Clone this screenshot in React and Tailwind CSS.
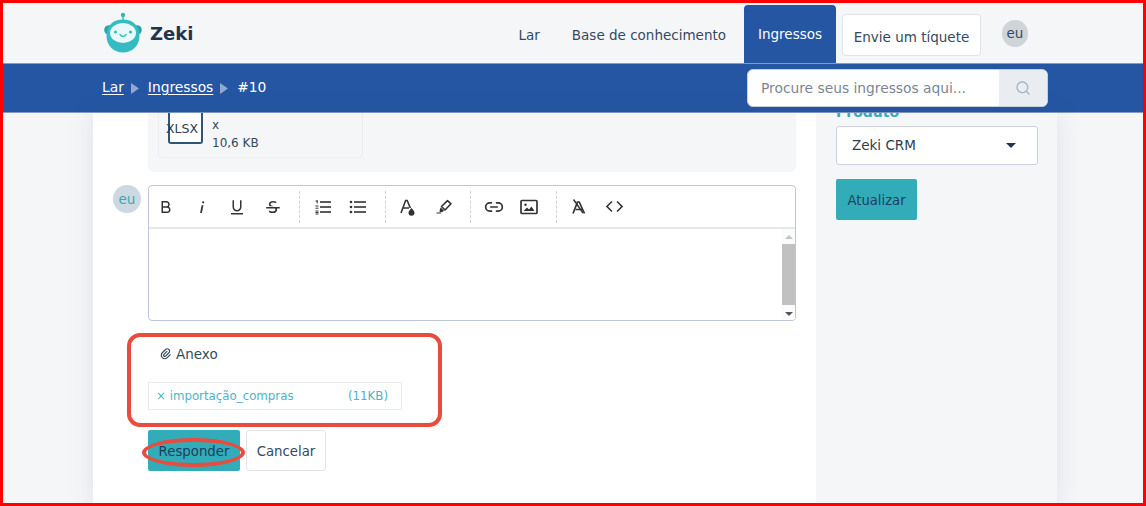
import React from "react";
import {
  RiBold, RiUnderline, RiStrikethrough, RiAttachment2, RiSearchLine, RiCodeLine,
} from "react-icons/ri";
import { Link2 } from "lucide-react";

const FONT = "font-['DejaVu_Sans','Liberation_Sans',sans-serif]";

function Logo() {
  return (
    <svg width="38" height="42" viewBox="0 0 38 42" className="shrink-0">
      <circle cx="19" cy="3" r="2.2" fill="#33b5bd" />
      <rect x="18.3" y="3" width="1.4" height="6" fill="#33b5bd" />
      <circle cx="5" cy="18" r="4.8" fill="#2aa3ad" />
      <circle cx="33" cy="18" r="4.8" fill="#2aa3ad" />
      <path d="M2.5 24C2.5 13 9.5 7.5 19 7.5S35.5 13 35.5 24C35.5 34 28 40.5 19 40.5S2.5 34 2.5 24Z" fill="#35bcc2" />
      <ellipse cx="19" cy="21" rx="13" ry="10" fill="#e9f8f8" />
      <circle cx="11.5" cy="20" r="1.6" fill="#35bcc2" />
      <circle cx="26.5" cy="20" r="1.6" fill="#35bcc2" />
      <path d="M16 22.5C17.2 25 20.8 25 22 22.5" fill="none" stroke="#35bcc2" strokeWidth="1.5" strokeLinecap="round" />
    </svg>
  );
}

function Arrow() {
  return (
    <svg width="8" height="11" viewBox="0 0 8 11" className="shrink-0">
      <path d="M0 0L8 5.5L0 11Z" fill="#92a9cf" />
    </svg>
  );
}

function ItalicIcon() {
  return (
    <svg width="18" height="18" viewBox="0 0 18 18" fill="#333">
      <path d="M8.6 7.2H10.4L8.9 15H7.1Z" />
      <circle cx="10.2" cy="4.3" r="1.1" />
    </svg>
  );
}

function OrderedIcon() {
  return (
    <svg width="18" height="18" viewBox="0 0 18 18" fill="#333">
      <rect x="6" y="3.2" width="11" height="1.6" />
      <rect x="6" y="8.2" width="11" height="1.6" />
      <rect x="6" y="13.2" width="11" height="1.6" />
      <rect x="1.5" y="2.5" width="2.4" height="1" />
      <rect x="2.7" y="2.5" width="1" height="3" />
      <rect x="1.5" y="7.5" width="3" height="1" />
      <rect x="1.5" y="9.7" width="3" height="1" />
      <rect x="1.5" y="12.5" width="3" height="1" />
      <rect x="1.5" y="14" width="3" height="1" />
      <rect x="1.5" y="15.5" width="3" height="1" />
    </svg>
  );
}

function UnorderedIcon() {
  return (
    <svg width="18" height="18" viewBox="0 0 18 18" fill="#333">
      <rect x="5" y="3.2" width="12" height="1.6" />
      <rect x="5" y="8.2" width="12" height="1.6" />
      <rect x="5" y="13.2" width="12" height="1.6" />
      <circle cx="2" cy="4" r="1.3" />
      <circle cx="2" cy="9" r="1.3" />
      <circle cx="2" cy="14" r="1.3" />
    </svg>
  );
}

function FontColorIcon() {
  return (
    <svg width="18" height="18" viewBox="0 0 18 18" fill="none">
      <path d="M2 15L6.6 2.5H8.2L11.3 10" stroke="#333" strokeWidth="1.6" />
      <path d="M4 10H10" stroke="#333" strokeWidth="1.5" />
      <path d="M12.5 10C14 12 15.5 13 15.5 14.7A3 3 0 0 1 9.5 14.7C9.5 13 11 12 12.5 10Z" fill="#333" />
    </svg>
  );
}

function PenIcon() {
  return (
    <svg width="18" height="18" viewBox="0 0 18 18" fill="none">
      <path d="M6.5 8.5L12.5 2.7L16 5.8L10 12Z" stroke="#333" strokeWidth="1.6" strokeLinejoin="round" />
      <path d="M5.7 9.5L9 12.8L7.3 14H4.5L5 11Z" fill="#333" />
      <path d="M1.5 14.5H6.2V15.6H1.5Z" fill="#333" />
    </svg>
  );
}

function ImageIcon() {
  return (
    <svg width="18" height="18" viewBox="0 0 18 18" fill="none">
      <rect x="1" y="2.5" width="16" height="13" rx="1" stroke="#333" strokeWidth="1.7" />
      <circle cx="5.5" cy="6.8" r="1.2" fill="#333" />
      <path d="M3.5 13L7 9.5L9 11.5L11.5 8.5L14.5 13Z" fill="#333" />
    </svg>
  );
}

function ClearIcon() {
  return (
    <svg width="18" height="18" viewBox="0 0 18 18" fill="none">
      <path d="M3 15.5L7.5 4H9.2L14.5 15.5" stroke="#333" strokeWidth="1.7" />
      <path d="M5.5 11.5H12" stroke="#333" strokeWidth="1.5" />
      <path d="M3.5 1.5L13 15" stroke="#333" strokeWidth="1.4" />
    </svg>
  );
}

function Tool({ children }) {
  return <span className="flex w-[35.5px] items-center justify-center text-[#333]">{children}</span>;
}

function Sep() {
  return <span className="ml-[8.5px] mr-[5px] h-[32px] border-l border-dashed border-[#ccd4e0]" />;
}

export default function App() {
  return (
    <div className={`${FONT} relative box-border h-[506px] w-[1146px] overflow-hidden border-[3px] border-[#ff0000] bg-[#f5f6f8] text-[13.5px] text-[#2c3e50]`}>
      <header className="flex h-[60px] items-center pl-[101px] pr-[115px]">
        <Logo />
        <span className="ml-[8px] text-[18px] font-bold text-[#1e3550]">Zeki</span>
        <nav className="ml-auto flex h-full items-end">
          <a className="mb-[18px] mr-[32px] text-[#34495e]">Lar</a>
          <a className="mb-[18px] mr-[18px] text-[#34495e]">Base de conhecimento</a>
          <a className="flex h-[58px] w-[92px] items-center justify-center rounded-t-[4px] bg-[#2556a3] text-white">Ingressos</a>
          <a className="mb-[7px] ml-[6px] flex h-[42px] w-[139px] items-center justify-center rounded-[4px] border border-[#dfe3ea] bg-white pt-[4px] text-[#34495e]">Envie um tíquete</a>
          <span className="mb-[16px] ml-[21px] flex h-[27px] w-[26px] items-center justify-center rounded-full bg-[#ced4da] text-[#34495e]">eu</span>
        </nav>
      </header>

      <div className="flex h-[50px] items-center border-y border-y-[#7f9bc6] bg-[#2556a3] pl-[99px] pr-[95px] text-[13.8px] text-white">
        <a className="mb-[2px] underline underline-offset-2">Lar</a>
        <span className="ml-[7px] mr-[9px]"><Arrow /></span>
        <a className="mb-[2px] underline underline-offset-2">Ingressos</a>
        <span className="ml-[7px] mr-[9px]"><Arrow /></span>
        <span className="mb-[2px]">#10</span>
        <div className="ml-auto flex h-[38px] w-[301px] overflow-hidden rounded-[6px] border border-[#c4cfe0] bg-white">
          <span className="flex flex-1 items-center pl-[13px] pt-[1px] text-[#7a8696]">Procure seus ingressos aqui...</span>
          <span className="flex w-[48px] items-center justify-center bg-[#e9ecf1] text-[#a9b4c2]">
            <RiSearchLine size={16} />
          </span>
        </div>
      </div>

      <main className="ml-[90px] flex h-[393px] w-[964px] overflow-hidden bg-white shadow-[0_0_24px_rgba(60,70,90,0.12)]">
        <section className="w-[723px] shrink-0">
          <div className="ml-[55px] mr-[20px] h-[59px] rounded-b-[6px] bg-[#f5f6f8] pl-[10px]">
            <div className="flex h-[45px] w-[205px] rounded-b-[4px] border border-t-0 border-[#eceef2] pl-[9px]">
              <div className="relative h-[31px] w-[35px] rounded-b-[3px] border-[2px] border-t-0 border-[#2f5577] bg-white">
                <span className="absolute left-[-4px] top-[8px] text-[12.5px] leading-[15px] text-[#2c3e50]">XLSX</span>
              </div>
              <div className="ml-[9px] text-[12px] leading-[19px] text-[#34495e]">
                <div className="mt-[3px]">x</div>
                <div className="mt-[-1px]">10,6 KB</div>
              </div>
            </div>
          </div>

          <div className="ml-[20px] mr-[20px] mt-[13px] flex">
            <span className="flex h-[28px] w-[28px] shrink-0 items-center justify-center rounded-full bg-[#ced8e0] text-[#3aa9b8]">eu</span>
            <div className="ml-[6.5px] h-[136px] flex-1 overflow-hidden rounded-[4px] border border-[#bcc6d4]">
              <div className="flex h-[43px] items-center border-b-[2px] border-b-[#e4e8ee]">
                <Tool><RiBold size={18} /></Tool>
                <Tool><ItalicIcon /></Tool>
                <Tool><RiUnderline size={18} /></Tool>
                <Tool><RiStrikethrough size={18} /></Tool>
                <Sep />
                <Tool><OrderedIcon /></Tool>
                <Tool><UnorderedIcon /></Tool>
                <Sep />
                <Tool><FontColorIcon /></Tool>
                <Tool><PenIcon /></Tool>
                <Sep />
                <Tool><Link2 size={20} strokeWidth={2} /></Tool>
                <Tool><ImageIcon /></Tool>
                <Sep />
                <Tool><ClearIcon /></Tool>
                <Tool><RiCodeLine size={19} /></Tool>
              </div>
              <div className="flex h-[91px] justify-end">
                <div className="flex w-[13px] flex-col items-center bg-[#fbfbfb]">
                  <span className="mt-[6px] h-0 w-0 border-x-[4px] border-b-[4px] border-x-transparent border-b-[#c4c4c4]" />
                  <span className="mt-[5px] h-[61px] w-full bg-[#c1c1c1]" />
                  <span className="mt-auto mb-[4px] h-0 w-0 border-x-[4px] border-t-[4px] border-x-transparent border-t-[#555]" />
                </div>
              </div>
            </div>
          </div>

          <div className="ml-[55px] mt-[22px] flex h-[22px] items-center pl-[11px] text-[#34495e]">
            <RiAttachment2 size={14} className="mr-[3px]" />
            <span>Anexo</span>
          </div>
          <div className="ml-[55px] mt-[17px] flex h-[28px] w-[254px] items-center justify-between border border-[#e6e9ee] pl-[7px] pr-[13px] pt-[1px] text-[11.8px] text-[#4db3c4]">
            <span>× importação_compras</span>
            <span>(11KB)</span>
          </div>
          <div className="ml-[55px] mt-[20px] flex gap-[6px] text-[13.3px]">
            <button className="h-[41px] w-[92px] rounded-[2px] bg-[#33acb9] pt-[2px] text-[#1e3f5c]">Responder</button>
            <button className="h-[41px] w-[80px] rounded-[3px] border border-[#dfe4ec] bg-white pt-[2px] text-[#34495e]">Cancelar</button>
          </div>
        </section>

        <aside className="flex-1 bg-[#f5f6f8] pl-[20px]">
          <div className="mt-[-11px] mb-[2px] h-[22px] text-[14px] font-bold leading-[20px] text-[#3aa9b8]">Produto</div>
          <div className="flex h-[39px] w-[202px] items-center justify-between rounded-[3px] border border-[#c9d2de] bg-white pl-[15px] pr-[21px]">
            <span>Zeki CRM</span>
            <span className="h-0 w-0 border-x-[5px] border-t-[5px] border-x-transparent border-t-[#1e3550]" />
          </div>
          <button className="mt-[14px] h-[41px] w-[81px] rounded-[2px] bg-[#33acb9] pt-[2px] text-[13.2px] text-[#1e3f5c]">Atualizar</button>
        </aside>
      </main>

      <div className="absolute left-[124px] top-[330px] h-[94px] w-[315px] rounded-[13px] border-[4px] border-[#e74c3c]" />
      <div className="absolute left-[139px] top-[435px] h-[29px] w-[103px] rounded-[50%] border-[4px] border-[#e74c3c]" />
    </div>
  );
}
